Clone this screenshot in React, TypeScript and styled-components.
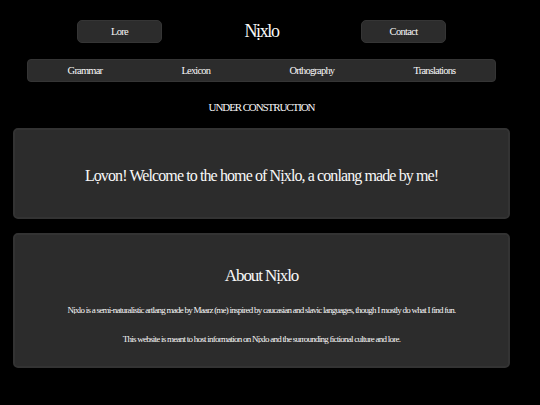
import React from "react";
import styled, { createGlobalStyle } from "styled-components";

const GlobalStyle = createGlobalStyle`
  html, body {
    margin: 0;
    padding: 0;
    background: #000;
  }
  body {
    font-family: "Liberation Serif", "DejaVu Serif", serif;
    color: #f8f8f8;
  }
`;

const Page = styled.div`
  width: 523px;
  padding-top: 20px;
  display: flex;
  flex-direction: column;
  align-items: center;
`;

const Header = styled.header`
  display: grid;
  grid-template-columns: 85px 199px 85px;
  height: 23px;
  align-items: center;
`;

const PillButton = styled.a`
  display: flex;
  align-items: center;
  justify-content: center;
  height: 23px;
  border-radius: 5px;
  background: #2c2c2c;
  border: 1px solid #353535;
  box-sizing: border-box;
  color: #f8f8f8;
  font-size: 10.5px;
  letter-spacing: -0.7px;
  text-decoration: none;
`;

const Title = styled.h1`
  margin: 0;
  text-align: center;
  font-size: 18px;
  font-weight: normal;
  letter-spacing: -1.4px;
`;

const NavBar = styled.nav`
  margin-top: 16px;
  width: 469px;
  height: 23px;
  box-sizing: border-box;
  border-radius: 4px;
  background: #2c2c2c;
  border: 1px solid #353535;
  display: flex;
  align-items: center;
  justify-content: space-around;
`;

const NavLink = styled.a`
  font-size: 10.5px;
  letter-spacing: -0.8px;
  color: #f8f8f8;
  text-decoration: none;
`;

const Notice = styled.div`
  margin-top: 19px;
  font-size: 11px;
  line-height: 13px;
  letter-spacing: -1.1px;
`;

const Card = styled.section<{ $height: number }>`
  width: 497px;
  height: ${(p) => p.$height}px;
  box-sizing: border-box;
  border-radius: 5px;
  background: #2c2c2c;
  border: 2px solid #333;
  display: flex;
  flex-direction: column;
  align-items: center;
  justify-content: center;
`;

const FirstCard = styled(Card)`
  margin-top: 14px;
  padding-top: 4px;
`;

const SecondCard = styled(Card)`
  margin-top: 14px;
  justify-content: flex-start;
  padding-top: 31px;
`;

const Welcome = styled.h2`
  margin: 0;
  font-size: 16px;
  font-weight: normal;
  letter-spacing: -0.9px;
`;

const AboutTitle = styled.h2`
  margin: 0;
  font-size: 17px;
  font-weight: normal;
  letter-spacing: -1.1px;
`;

const Paragraph = styled.p<{ $gap: number }>`
  margin: ${(p) => p.$gap}px 0 0;
  font-size: 9px;
  letter-spacing: -0.75px;
  text-align: center;
`;

const navItems = ["Grammar", "Lexicon", "Orthography", "Translations"];

export default function App(): React.ReactElement {
  return (
    <>
      <GlobalStyle />
      <Page>
        <Header>
          <PillButton href="#">Lore</PillButton>
          <Title>Nịxlo</Title>
          <PillButton href="#">Contact</PillButton>
        </Header>
        <NavBar>
          {navItems.map((item) => (
            <NavLink key={item} href="#">
              {item}
            </NavLink>
          ))}
        </NavBar>
        <Notice>UNDER CONSTRUCTION</Notice>
        <FirstCard $height={91}>
          <Welcome>Lọvon! Welcome to the home of Nịxlo, a conlang made by me!</Welcome>
        </FirstCard>
        <SecondCard $height={135}>
          <AboutTitle>About Nịxlo</AboutTitle>
          <Paragraph $gap={19}>
            Nịxlo is a semi-naturalistic artlang made by Maarz (me) inspired by caucasian and slavic
            languages, though I mostly do what I find fun.
          </Paragraph>
          <Paragraph $gap={19}>
            This website is meant to host information on Nịxlo and the surrounding fictional culture
            and lore.
          </Paragraph>
        </SecondCard>
      </Page>
    </>
  );
}
